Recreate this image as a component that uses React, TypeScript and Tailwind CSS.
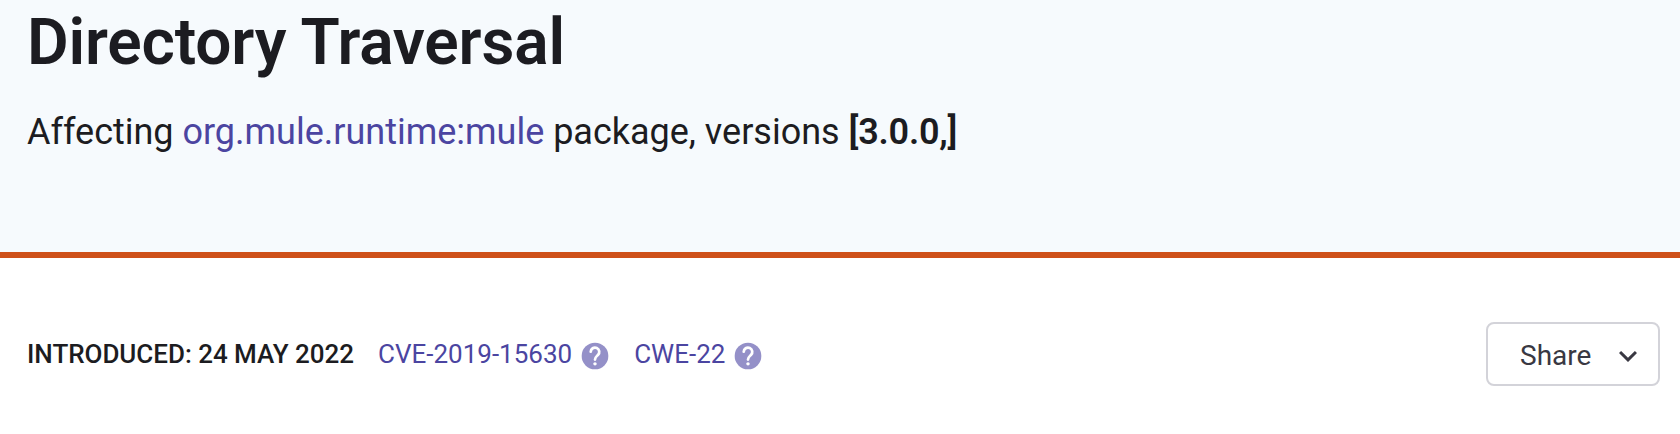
export default function App() {
  const help = (
    <svg viewBox="0 0 24 24" className="size-8 shrink-0">
      <circle cx="12" cy="12" r="10" fill="#9490c8" />
      <path d="M8.8 8.8a3.2 3.2 0 1 1 5.4 2.4C13.1 12.3 12 13 12 14.7" fill="none" stroke="#fff" strokeWidth="2.05" strokeLinecap="round" />
      <circle cx="12" cy="17.9" r="1.3" fill="#fff" />
    </svg>
  );
  return (
    <main className="h-[434px] overflow-hidden bg-white font-['Roboto',sans-serif] text-[#1c1c21]">
      <header className="h-[258px] border-b-[6px] border-[#ce5019] bg-[#f6fafd] px-[27px]">
        <h1 className="pt-[7px] text-[64px] leading-[72px] font-semibold tracking-[-0.18px]">Directory Traversal</h1>
        <p className="pt-[31px] text-[36px] leading-[44px] tracking-[-0.01px]">
          Affecting <a className="text-[#4b45a1]">org.mule.runtime:mule</a> package, versions <strong className="font-semibold tracking-[-0.2px]">[3.0.0,]</strong>
        </p>
      </header>
      <section className="flex items-start justify-between pt-[64px] pr-[20px] pl-[27px]">
        <div className="flex h-16 items-center text-[26px]">
          <span className="font-medium tracking-[-0.03px]">INTRODUCED: 24 MAY 2022</span>
          <a className="ml-[24px] text-[#4b45a1]">CVE-2019-15630</a>
          <span className="ml-[7px] pt-[3px]">{help}</span>
          <a className="ml-[23px] text-[#4b45a1]">CWE-22</a>
          <span className="ml-[7px] pt-[3px]">{help}</span>
        </div>
        <button className="flex h-16 w-[174px] items-center rounded-lg border-2 border-[#d3d3d9] pt-[3px] pl-8 text-[28px] text-[#393842]">
          Share
          <svg viewBox="0 0 24 24" className="ml-[19px] size-9 fill-[#393842]"><path d="M7.41 8.59 12 13.17l4.59-4.58L18 10l-6 6-6-6z" /></svg>
        </button>
      </section>
    </main>
  );
}
